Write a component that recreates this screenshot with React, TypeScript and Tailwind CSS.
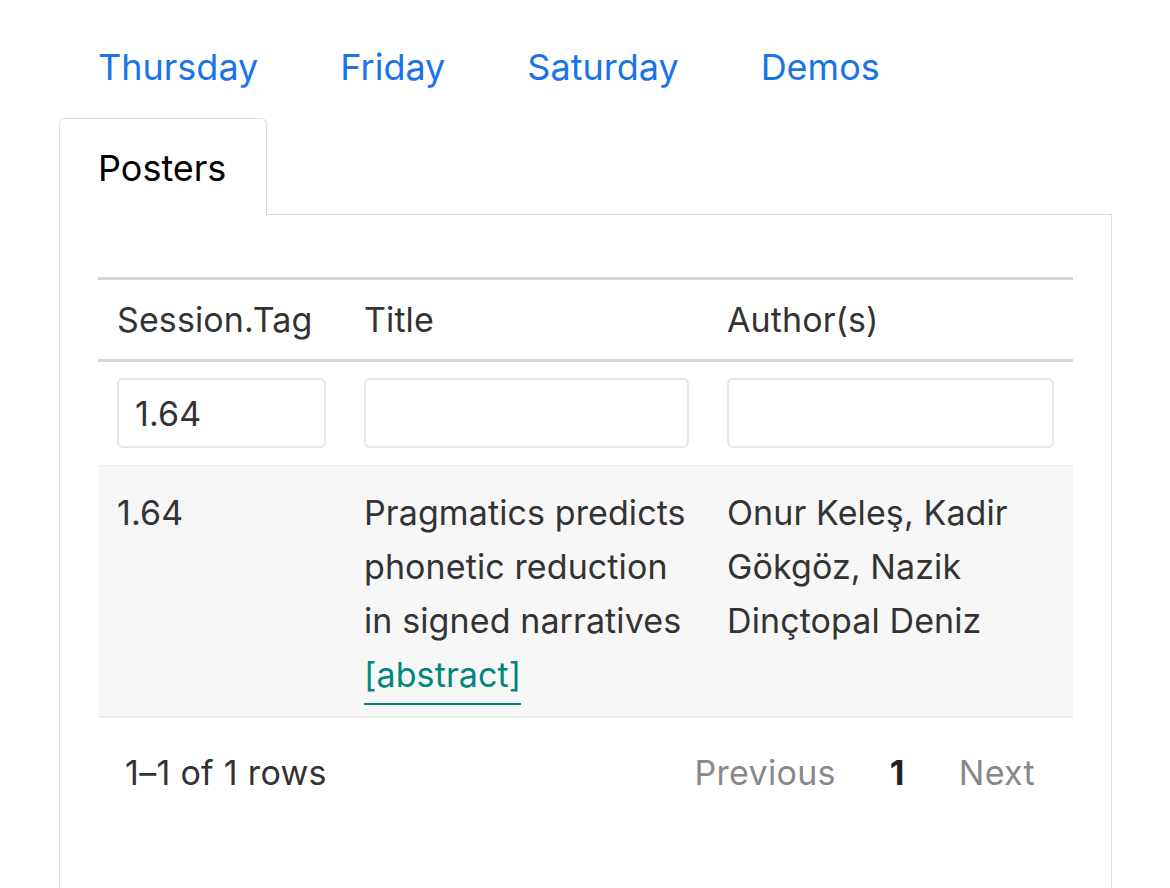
import React from "react";

export default function App() {
  const tabs = ["Thursday", "Friday", "Saturday", "Demos"];
  return (
    <div className="w-[1170px] h-[888px] overflow-hidden bg-white" style={{ fontFamily: "Inter, 'Noto Sans', sans-serif" }}>
      <div className="pl-[59px] pr-[58px]">
        <div className="h-[118px] flex items-start pt-[41px] pl-[39px] gap-[82px] text-[36px] leading-[52px] text-[#1a73e8]">
          {tabs.map((t) => (
            <a key={t}>{t}</a>
          ))}
        </div>
        <div className="flex">
          <div className="w-[208px] h-[98px] border border-b-0 border-[#dcdcdc] rounded-t-[6px] flex items-center pl-[38px] text-[36px] text-black bg-white relative -mb-px z-10">
            Posters
          </div>
          <div className="flex-1 border-b border-[#dcdcdc]" />
        </div>
        <div className="border border-t-0 border-[#dcdcdc] h-[700px] px-[38px] pt-[62px]">
          <table className="w-full border-collapse text-[34px] text-[#333] tracking-[0.1px]">
            <colgroup>
              <col className="w-[247px]" />
              <col className="w-[363px]" />
              <col />
            </colgroup>
            <thead>
              <tr className="border-t-[3px] border-b-[3px] border-[#d5d5d5]">
                <th className="text-left font-normal h-[82px] px-[19px] align-middle">Session.Tag</th>
                <th className="text-left font-normal px-[19px] align-middle">Title</th>
                <th className="text-left font-normal px-[19px] align-middle">Author(s)</th>
              </tr>
            </thead>
            <tbody>
              <tr className="border-b border-[#efefef]">
                <td className="px-[19px] pt-[16px] pb-[17px]">
                  <input
                    defaultValue="1.64"
                    className="w-full h-[70px] border-2 border-[#e6e6e6] rounded-[6px] px-[16px] text-[34px] text-[#333] outline-none"
                  />
                </td>
                <td className="px-[19px] pt-[16px] pb-[17px]">
                  <input className="w-full h-[70px] border-2 border-[#e6e6e6] rounded-[6px] px-[16px] text-[34px] outline-none" />
                </td>
                <td className="px-[19px] pt-[16px] pb-[17px]">
                  <input className="w-full h-[70px] border-2 border-[#e6e6e6] rounded-[6px] px-[16px] text-[34px] outline-none" />
                </td>
              </tr>
              <tr className="bg-[#f7f7f7] border-b-2 border-[#ececec]">
                <td className="px-[19px] pt-[20px] pb-[14px] align-top leading-[54px]">1.64</td>
                <td className="px-[19px] pt-[20px] pb-[14px] align-top leading-[54px]">
                  Pragmatics predicts phonetic reduction in signed narratives{" "}
                  <a className="text-[#00877a] border-b-2 border-[#00877a] pb-[8px]">[abstract]</a>
                </td>
                <td className="px-[19px] pt-[20px] pb-[14px] align-top leading-[54px]">
                  Onur Keleş, Kadir Gökgöz, Nazik Dinçtopal Deniz
                </td>
              </tr>
            </tbody>
          </table>
          <div className="flex items-center justify-between h-[108px] pl-[27px] pr-[38px] text-[34px] tracking-[0.3px]">
            <span className="text-[#333]">1–1 of 1 rows</span>
            <div className="flex items-center gap-[54px]">
              <span className="text-[#888]">Previous</span>
              <span className="text-[#222] font-bold">1</span>
              <span className="text-[#888]">Next</span>
            </div>
          </div>
        </div>
      </div>
    </div>
  );
}
